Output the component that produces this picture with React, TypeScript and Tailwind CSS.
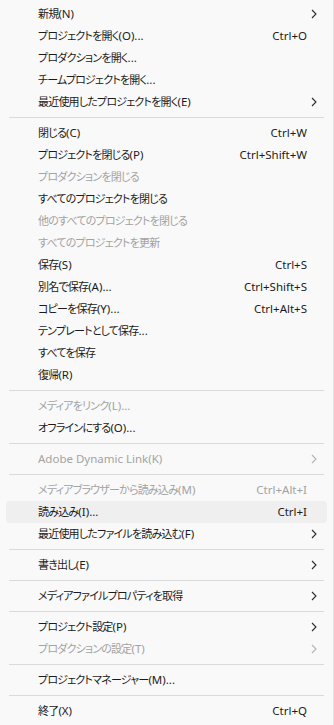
type Item = {
  label: string;
  shortcut?: string;
  sub?: boolean;
  disabled?: boolean;
  active?: boolean;
};

type Entry = Item | 'sep';

const MENU: Entry[] = [
  { label: '新規(N)', sub: true },
  { label: 'プロジェクトを開く(O)...', shortcut: 'Ctrl+O' },
  { label: 'プロダクションを開く...' },
  { label: 'チームプロジェクトを開く...' },
  { label: '最近使用したプロジェクトを開く(E)', sub: true },
  'sep',
  { label: '閉じる(C)', shortcut: 'Ctrl+W' },
  { label: 'プロジェクトを閉じる(P)', shortcut: 'Ctrl+Shift+W' },
  { label: 'プロダクションを閉じる', disabled: true },
  { label: 'すべてのプロジェクトを閉じる' },
  { label: '他のすべてのプロジェクトを閉じる', disabled: true },
  { label: 'すべてのプロジェクトを更新', disabled: true },
  { label: '保存(S)', shortcut: 'Ctrl+S' },
  { label: '別名で保存(A)...', shortcut: 'Ctrl+Shift+S' },
  { label: 'コピーを保存(Y)...', shortcut: 'Ctrl+Alt+S' },
  { label: 'テンプレートとして保存...' },
  { label: 'すべてを保存' },
  { label: '復帰(R)' },
  'sep',
  { label: 'メディアをリンク(L)...', disabled: true },
  { label: 'オフラインにする(O)...' },
  'sep',
  { label: 'Adobe Dynamic Link(K)', sub: true, disabled: true },
  'sep',
  { label: 'メディアブラウザーから読み込み(M)', shortcut: 'Ctrl+Alt+I', disabled: true },
  { label: '読み込み(I)...', shortcut: 'Ctrl+I', active: true },
  { label: '最近使用したファイルを読み込む(F)', sub: true },
  'sep',
  { label: '書き出し(E)', sub: true },
  'sep',
  { label: 'メディアファイルプロパティを取得', sub: true },
  'sep',
  { label: 'プロジェクト設定(P)', sub: true },
  { label: 'プロダクションの設定(T)', sub: true, disabled: true },
  'sep',
  { label: 'プロジェクトマネージャー(M)...' },
  'sep',
  { label: '終了(X)', shortcut: 'Ctrl+Q' },
];

const CJK = /([\u3000-\u30ff\u4e00-\u9fff\uff00-\uffef]+)/;

// Japanese runs are set a bit tighter, like the UI font in the screenshot
function Label({ text }: { text: string }) {
  return (
    <>
      {text.split(CJK).map((part, i) =>
        CJK.test(part) ? (
          <span key={i} className="text-[11px] tracking-[-0.8px]">
            {part}
          </span>
        ) : (
          <span key={i}>{part}</span>
        )
      )}
    </>
  );
}

function Chevron({ dim }: { dim?: boolean }) {
  return (
    <svg width="6" height="10" viewBox="0 0 6 10" fill="none">
      <path d="M1 1 L5 5 L1 9" stroke={dim ? '#b4b4b4' : '#2b2b2b'} strokeWidth="1.1" />
    </svg>
  );
}

function MenuRow({ item }: { item: Item }) {
  const tone = item.disabled ? 'text-[#a3a3a3]' : 'text-[#1b1b1b]';
  return (
    <div
      className={`mx-[6px] h-[22px] flex items-center pl-[32px] pr-[8px] rounded-[4px] ${tone} ${
        item.active ? 'bg-[#efefef]' : ''
      }`}
    >
      <span className="flex-1 whitespace-nowrap">
        <Label text={item.label} />
      </span>
      {item.shortcut && <span className="whitespace-nowrap">{item.shortcut}</span>}
      <div className="w-[12px] flex justify-end pr-[2px]">
        {item.sub && <Chevron dim={item.disabled} />}
      </div>
    </div>
  );
}

export default function App() {
  return (
    <div
      className="w-[334px] h-[725px] bg-[#f9f9f9] border-r border-[#e3e3e3] pt-[3px] text-[11.5px] leading-none overflow-hidden [font-feature-settings:'palt']"
      style={{ fontFamily: '"Noto Sans", "Noto Sans CJK JP", sans-serif' }}
    >
      {MENU.map((entry, i) =>
        entry === 'sep' ? (
          <div key={i} className="h-[9px] flex items-center px-[9px]">
            <div className="h-px w-full bg-[#dadada]" />
          </div>
        ) : (
          <MenuRow key={i} item={entry} />
        )
      )}
    </div>
  );
}
